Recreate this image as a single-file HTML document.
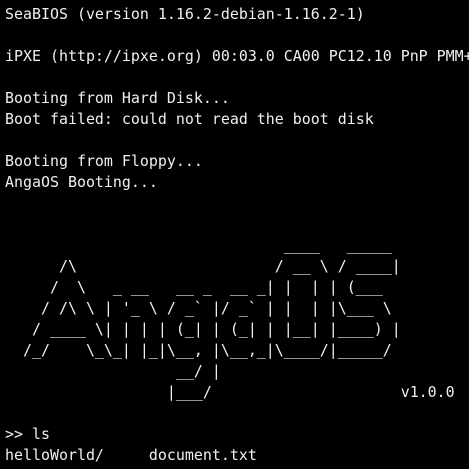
<!DOCTYPE html>
<html><head><meta charset="utf-8"><style>
html,body{margin:0;padding:0;background:#000;width:469px;height:469px;overflow:hidden}
pre{margin:0;padding:4px 0 0 5px;font-family:"DejaVu Sans Mono","Liberation Mono",monospace;font-size:14.95px;line-height:21px;color:#f0f0f0;white-space:pre}
</style></head><body><pre>SeaBIOS (version 1.16.2-debian-1.16.2-1)

iPXE (http://ipxe.org) 00:03.0 CA00 PC12.10 PnP PMM+

Booting from Hard Disk...
Boot failed: could not read the boot disk

Booting from Floppy...
AngaOS Booting...


                               ____   _____
      /\                      / __ \ / ____|
     /  \   _ __   __ _  __ _| |  | | (___
    / /\ \ | '_ \ / _` |/ _` | |  | |\___ \
   / ____ \| | | | (_| | (_| | |__| |____) |
  /_/    \_\_| |_|\__, |\__,_|\____/|_____/
                   __/ |
                  |___/                     v1.0.0

&gt;&gt; ls
helloWorld/     document.txt</pre></body></html>
